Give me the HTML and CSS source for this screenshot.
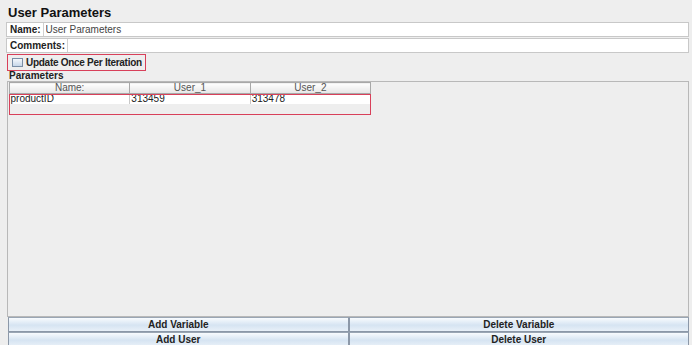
FILE: index.html
```html
<!DOCTYPE html>
<html lang="en">
<head>
  <meta charset="UTF-8">
  <title>User Parameters</title>
  <link rel="stylesheet" href="styles.css">
</head>
<body>
  <div class="panel">
    <h1>User Parameters</h1>

    <div class="field-box">
      <div class="field">
        <label>Name:</label>
        <input type="text" value="User Parameters">
      </div>
      <div class="field">
        <label>Comments:</label>
        <input type="text" value="">
      </div>
    </div>

    <div class="check-row">
      <span class="check"></span>
      <span>Update Once Per Iteration</span>
    </div>

    <div class="params-label">Parameters</div>

    <div class="params">
      <div class="table-wrap">
        <table>
          <thead>
            <tr>
              <th>Name:</th>
              <th>User_1</th>
              <th>User_2</th>
            </tr>
          </thead>
          <tbody>
            <tr>
              <td>productID</td>
              <td>313459</td>
              <td>313478</td>
            </tr>
          </tbody>
        </table>
        <div class="mark"></div>
      </div>
    </div>

    <div class="buttons">
      <button>Add Variable</button>
      <button>Delete Variable</button>
      <button>Add User</button>
      <button>Delete User</button>
    </div>
  </div>
</body>
</html>
```

FILE: styles.css
```css
body {
  margin: 0;
  background: #eeeeee;
  font-family: "Liberation Sans", Arial, sans-serif;
  font-size: 10px;
  color: #222;
  overflow: hidden;
}
.panel {
  padding: 6px 3px 0 6px;
  height: 347px;
  box-sizing: border-box;
  display: flex;
  flex-direction: column;
}
h1 {
  font-size: 13px;
  font-weight: bold;
  margin: 0 0 2px 2px;
  height: 14px;
  line-height: 14px;
  color: #111;
}
.field-box {
  display: flex;
  flex-direction: column;
  gap: 1px;
}
.field {
  display: flex;
  align-items: center;
  background: #fff;
  border: 1px solid #c8c8c8;
  height: 13px;
  padding: 0 1px;
}
.field label {
  font-weight: bold;
  color: #222;
  padding-left: 2px;
  padding-right: 2px;
}
.field input {
  flex: 1;
  border: none;
  border-left: 1px solid #d0d0d0;
  font: inherit;
  padding: 0 2px;
  height: 13px;
  color: #444;
  outline: none;
  background: #fff;
}
.check-row {
  display: flex;
  align-items: center;
  gap: 3px;
  margin: 1px 0 0 1px;
  align-self: flex-start;
  white-space: nowrap;
  height: 15px;
  padding: 0 3px 0 4px;
  border: 1px solid #d8405a;
  font-weight: bold;
  letter-spacing: -0.28px;
  color: #222;
}
.check {
  width: 9px;
  height: 7px;
  border: 1px solid #7a8ea6;
  background: linear-gradient(#f4f8fc, #c6d6e8);
}
.params-label {
  font-weight: bold;
  margin: 0 0 0 3px;
  height: 10px;
  line-height: 10px;
}
.params {
  flex: 1;
  margin: 0 0 0 1px;
  border: 1px solid #b8b8b8;
  padding: 0 1px;
  background: #eeeeee;
}
.table-wrap {
  position: relative;
  width: 362px;
}
table {
  border-collapse: collapse;
  width: 362px;
  table-layout: fixed;
}
th {
  font-weight: normal;
  height: 10px;
  padding: 0;
  line-height: 10px;
  background: linear-gradient(#ffffff, #e6e6e6);
  border: 1px solid #a8a8a8;
  color: #555;
}
td {
  height: 10px;
  padding: 0 1px;
  line-height: 10px;
  border-right: 1px solid #c8c8c8;
  background: #fff;
  color: #222;
}
.mark {
  position: absolute;
  left: 0;
  top: 12px;
  width: 362px;
  height: 21px;
  border: 1px solid #d8405a;
  box-sizing: border-box;
}
.buttons {
  display: grid;
  grid-template-columns: 1fr 1fr;
  margin: 0 0 0 2px;
}
button {
  font: inherit;
  font-weight: bold;
  color: #222;
  height: 15px;
  padding: 0;
  border: 1px solid #8c98a8;
  border-top-color: #9aa6b4;
  background: linear-gradient(#f8fbfe, #d6e4f2 55%, #e8f0f8);
}
```
